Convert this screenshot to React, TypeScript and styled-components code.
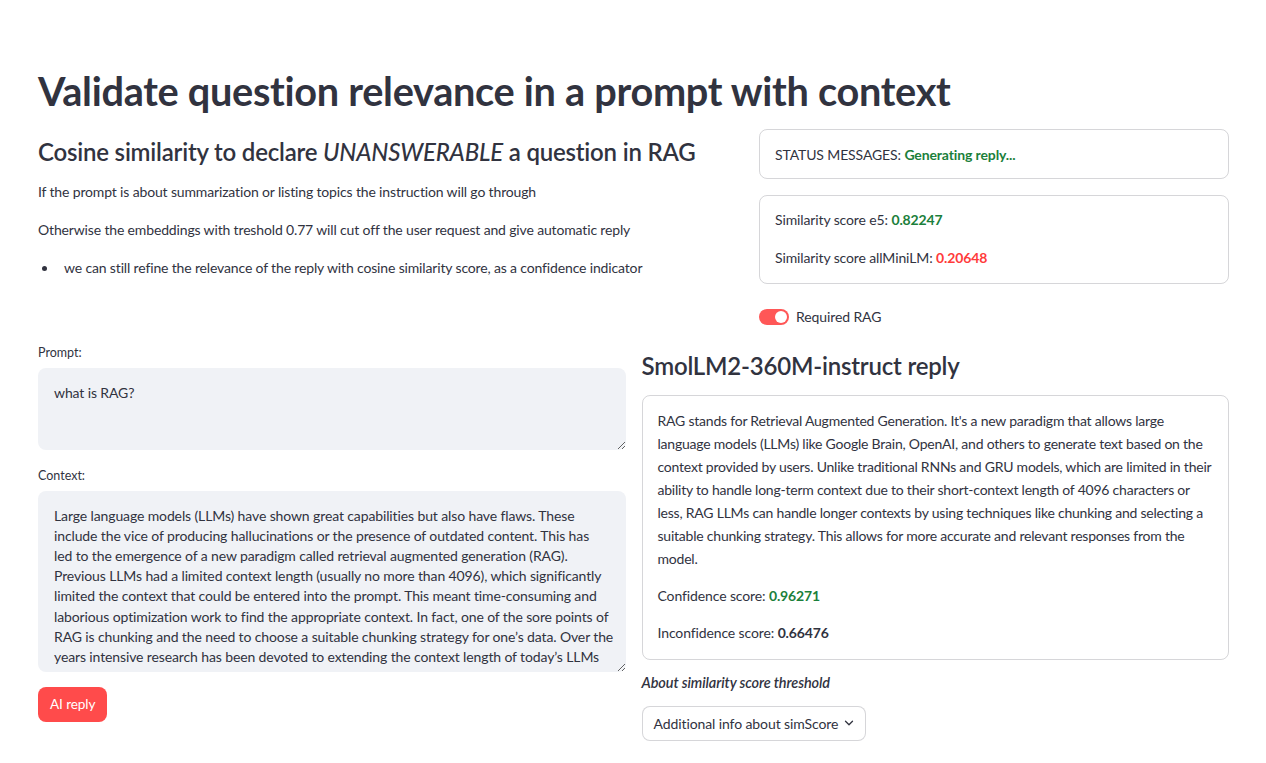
import React from "react";
import styled, { createGlobalStyle } from "styled-components";
import { ChevronDown } from "lucide-react";

const Global = createGlobalStyle`
  html, body { margin: 0; padding: 0; background: #ffffff; }
  body {
    font-family: Lato, "Noto Sans", sans-serif;
    color: #31333f;
    -webkit-font-smoothing: antialiased;
  }
  * { box-sizing: border-box; }
`;

const Page = styled.main`
  padding: 65px 37px 40px 38px;
  display: flex;
  flex-direction: column;
`;

const Title = styled.h1`
  margin: 0 0 12px 0;
  font-size: 39.7px;
  line-height: 52px;
  font-weight: 700;
  letter-spacing: -0.3px;
  color: #31333f;
`;

const Row = styled.div<{ $cols: string; $mt?: number }>`
  display: grid;
  grid-template-columns: ${(p) => p.$cols};
  column-gap: 16px;
  align-items: start;
  margin-top: ${(p) => p.$mt ?? 0}px;
`;

const Col = styled.div`
  display: flex;
  flex-direction: column;
  min-width: 0;
`;

const SubHeading = styled.h3<{ $mt: number }>`
  margin: ${(p) => p.$mt}px 0 0 0;
  font-size: 24px;
  line-height: 30px;
  font-weight: 600;
  letter-spacing: -0.2px;
  color: #31333f;
`;

const Para = styled.p<{ $mt: number }>`
  margin: ${(p) => p.$mt}px 0 0 0;
  font-size: 14px;
  line-height: 22.4px;
  letter-spacing: -0.15px;
`;

const BulletItem = styled.div`
  margin-top: 15px;
  display: flex;
  align-items: center;
  font-size: 14px;
  line-height: 22.4px;
  letter-spacing: -0.15px;
`;

const BulletDot = styled.span`
  width: 26px;
  padding-left: 4px;
  flex: none;
  &::before {
    content: "";
    display: block;
    width: 5px;
    height: 5px;
    border-radius: 50%;
    background: #31333f;
  }
`;

const Card = styled.div<{ $pt: number; $pb: number; $mt?: number }>`
  border: 1px solid rgba(49, 51, 63, 0.2);
  border-radius: 8px;
  padding: ${(p) => p.$pt}px 15px ${(p) => p.$pb}px 15px;
  margin-top: ${(p) => p.$mt ?? 0}px;
  display: flex;
  flex-direction: column;
`;

const CardLine = styled.div<{ $mt?: number; $lh?: number; $ls?: number }>`
  margin-top: ${(p) => p.$mt ?? 0}px;
  font-size: 14px;
  line-height: ${(p) => p.$lh ?? 22.4}px;
  letter-spacing: ${(p) => p.$ls ?? -0.12}px;
`;

const Value = styled.span<{ $tone: "green" | "red" | "plain" }>`
  font-weight: 700;
  color: ${(p) =>
    p.$tone === "green" ? "#1b7f3b" : p.$tone === "red" ? "#ff3b3b" : "#31333f"};
`;

const ToggleRow = styled.label`
  margin-top: 21px;
  display: flex;
  align-items: center;
  gap: 7px;
  height: 24px;
  font-size: 14px;
  letter-spacing: -0.1px;
`;

const Track = styled.span`
  position: relative;
  width: 30px;
  height: 16px;
  border-radius: 8px;
  background: #ff5757;
  flex: none;
`;

const Knob = styled.span`
  position: absolute;
  right: 2px;
  top: 2px;
  width: 12px;
  height: 12px;
  border-radius: 50%;
  background: #ffffff;
`;

const FieldLabel = styled.div<{ $mt?: number }>`
  margin-top: ${(p) => p.$mt ?? 0}px;
  font-size: 12.5px;
  line-height: 20px;
  height: 20px;
  margin-bottom: 5px;
`;

const TextArea = styled.textarea<{ $h: number; $lh: number }>`
  width: 100%;
  height: ${(p) => p.$h}px;
  display: block;
  border: none;
  outline: none;
  border-radius: 8px;
  background: #f0f2f6;
  color: #31333f;
  padding: 15px 4px 0 16px;
  font-family: Lato, "Noto Sans", sans-serif;
  font-size: 14px;
  line-height: ${(p) => p.$lh}px;
  letter-spacing: -0.12px;
  resize: vertical;
  overflow: hidden;
`;

const PrimaryButton = styled.button`
  margin-top: 15px;
  align-self: flex-start;
  height: 35px;
  padding: 0 12px;
  border: none;
  border-radius: 8px;
  background: #ff4b4b;
  color: #ffffff;
  font-family: Lato, "Noto Sans", sans-serif;
  font-size: 13.6px;
  letter-spacing: -0.1px;
`;

const ItalicNote = styled.div`
  margin-top: 12px;
  font-size: 14.5px;
  line-height: 22px;
  font-style: italic;
  font-weight: 600;
  letter-spacing: -0.1px;
`;

const ExpanderButton = styled.button`
  margin-top: 12px;
  align-self: flex-start;
  height: 35px;
  padding: 0 9px 0 11px;
  display: flex;
  align-items: center;
  gap: 4px;
  border: 1px solid rgba(49, 51, 63, 0.2);
  border-radius: 8px;
  background: #ffffff;
  color: #31333f;
  font-family: Lato, "Noto Sans", sans-serif;
  font-size: 14px;
  letter-spacing: -0.1px;
`;

const contextLines = [
  "Large language models (LLMs) have shown great capabilities but also have flaws. These",
  "include the vice of producing hallucinations or the presence of outdated content. This has",
  "led to the emergence of a new paradigm called retrieval augmented generation (RAG).",
  "Previous LLMs had a limited context length (usually no more than 4096), which significantly",
  "limited the context that could be entered into the prompt. This meant time-consuming and",
  "laborious optimization work to find the appropriate context. In fact, one of the sore points of",
  "RAG is chunking and the need to choose a suitable chunking strategy for one\u2019s data. Over the",
  "years intensive research has been devoted to extending the context length of today\u2019s LLMs",
  "precisely to reduce this problem and be able to provide more context to the model.",
];
const contextText = contextLines.join("\n");

export default function App() {
  return (
    <>
      <Global />
      <Page>
        <Title>Validate question relevance in a prompt with context</Title>

        <Row $cols="3fr 2fr">
          <Col>
            <SubHeading $mt={8}>
              Cosine similarity to declare <em style={{ fontWeight: 500 }}>UNANSWERABLE</em> a question in RAG
            </SubHeading>
            <Para $mt={14}>
              If the prompt is about summarization or listing topics the instruction will go through
            </Para>
            <Para $mt={16}>
              Otherwise the embeddings with treshold 0.77 will cut off the user request and give automatic reply
            </Para>
            <BulletItem>
              <BulletDot />
              we can still refine the relevance of the reply with cosine similarity score, as a confidence indicator
            </BulletItem>
          </Col>
          <Col>
            <Card $pt={14} $pb={12}>
              <CardLine>
                STATUS MESSAGES: <Value $tone="green">Generating reply...</Value>
              </CardLine>
            </Card>
            <Card $pt={13} $pb={13} $mt={16}>
              <CardLine>
                Similarity score e5: <Value $tone="green">0.82247</Value>
              </CardLine>
              <CardLine $mt={15.6}>
                Similarity score allMiniLM: <Value $tone="red">0.20648</Value>
              </CardLine>
            </Card>
            <ToggleRow>
              <Track>
                <Knob />
              </Track>
              Required RAG
            </ToggleRow>
          </Col>
        </Row>

        <Row $cols="1fr 1fr" $mt={14}>
          <Col>
            <FieldLabel>Prompt:</FieldLabel>
            <TextArea $h={82} $lh={20} readOnly value="what is RAG?" />
            <FieldLabel $mt={16}>Context:</FieldLabel>
            <TextArea $h={181} $lh={20.15} readOnly value={contextText} />
            <PrimaryButton>AI reply</PrimaryButton>
          </Col>
          <Col>
            <SubHeading $mt={8}>SmolLM2-360M-instruct reply</SubHeading>
            <Card $pt={13} $pb={14} $mt={14}>
              <CardLine $lh={23} $ls={-0.22}>
                RAG stands for Retrieval Augmented Generation. It's a new paradigm that allows large language models
                (LLMs) like Google Brain, OpenAI, and others to generate text based on the context provided by users.
                Unlike traditional RNNs and GRU models, which are limited in their ability to handle long-term context
                due to their short-context length of 4096 characters or less, RAG LLMs can handle longer contexts by
                using techniques like chunking and selecting a suitable chunking strategy. This allows for more accurate
                and relevant responses from the model.
              </CardLine>
              <CardLine $mt={15}>
                Confidence score: <Value $tone="green">0.96271</Value>
              </CardLine>
              <CardLine $mt={15}>
                Inconfidence score: <Value $tone="plain">0.66476</Value>
              </CardLine>
            </Card>
            <ItalicNote>About similarity score threshold</ItalicNote>
            <ExpanderButton>
              Additional info about simScore
              <ChevronDown size={14} strokeWidth={2.2} />
            </ExpanderButton>
          </Col>
        </Row>
      </Page>
    </>
  );
}
